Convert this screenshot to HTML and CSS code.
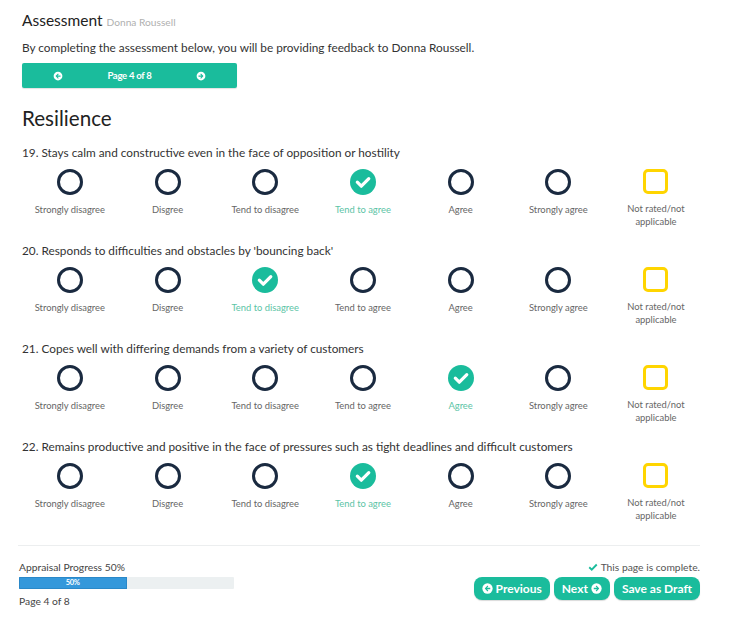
FILE: index.html
```html
<!DOCTYPE html>
<html>
<head>
<meta charset="utf-8">
<link rel="stylesheet" href="styles.css">
</head>
<body>
<div class="page">
  <h1 class="title">Assessment <small>Donna Roussell</small></h1>
  <p class="intro">By completing the assessment below, you will be providing feedback to Donna Roussell.</p>
  <div class="pager">
    <svg class="arrow" viewBox="0 0 16 16"><circle cx="8" cy="8" r="7" fill="#fff"/><path d="M12 7H7.2l2-2-1.2-1.2L4 8l4 4.2 1.2-1.2-2-2H12z" fill="#1abc9c"/></svg>
    <span>Page 4 of 8</span>
    <svg class="arrow" viewBox="0 0 16 16"><circle cx="8" cy="8" r="7" fill="#fff"/><path d="M4 7h4.8l-2-2L8 3.8 12 8l-4 4.2-1.2-1.2 2-2H4z" fill="#1abc9c"/></svg>
  </div>

  <h2 class="section">Resilience</h2>

  <div class="question">
    <p class="qtext">19. Stays calm and constructive even in the face of opposition or hostility</p>
    <div class="scale">
      <div class="opt"><span class="ring"></span><span class="lbl">Strongly disagree</span></div>
      <div class="opt"><span class="ring"></span><span class="lbl">Disgree</span></div>
      <div class="opt"><span class="ring"></span><span class="lbl">Tend to disagree</span></div>
      <div class="opt sel"><svg class="chk" viewBox="0 0 26 26"><circle cx="13" cy="13" r="13" fill="#1abc9c"/><path d="M7.3 13.2l4 4 7.5-7.6" fill="none" stroke="#fff" stroke-width="3.2" stroke-linecap="round" stroke-linejoin="round"/></svg><span class="lbl">Tend to agree</span></div>
      <div class="opt"><span class="ring"></span><span class="lbl">Agree</span></div>
      <div class="opt"><span class="ring"></span><span class="lbl">Strongly agree</span></div>
      <div class="opt na"><span class="box"></span><span class="lbl">Not rated/not applicable</span></div>
    </div>
  </div>

  <div class="question">
    <p class="qtext">20. Responds to difficulties and obstacles by 'bouncing back'</p>
    <div class="scale">
      <div class="opt"><span class="ring"></span><span class="lbl">Strongly disagree</span></div>
      <div class="opt"><span class="ring"></span><span class="lbl">Disgree</span></div>
      <div class="opt sel"><svg class="chk" viewBox="0 0 26 26"><circle cx="13" cy="13" r="13" fill="#1abc9c"/><path d="M7.3 13.2l4 4 7.5-7.6" fill="none" stroke="#fff" stroke-width="3.2" stroke-linecap="round" stroke-linejoin="round"/></svg><span class="lbl">Tend to disagree</span></div>
      <div class="opt"><span class="ring"></span><span class="lbl">Tend to agree</span></div>
      <div class="opt"><span class="ring"></span><span class="lbl">Agree</span></div>
      <div class="opt"><span class="ring"></span><span class="lbl">Strongly agree</span></div>
      <div class="opt na"><span class="box"></span><span class="lbl">Not rated/not applicable</span></div>
    </div>
  </div>

  <div class="question">
    <p class="qtext">21. Copes well with differing demands from a variety of customers</p>
    <div class="scale">
      <div class="opt"><span class="ring"></span><span class="lbl">Strongly disagree</span></div>
      <div class="opt"><span class="ring"></span><span class="lbl">Disgree</span></div>
      <div class="opt"><span class="ring"></span><span class="lbl">Tend to disagree</span></div>
      <div class="opt"><span class="ring"></span><span class="lbl">Tend to agree</span></div>
      <div class="opt sel"><svg class="chk" viewBox="0 0 26 26"><circle cx="13" cy="13" r="13" fill="#1abc9c"/><path d="M7.3 13.2l4 4 7.5-7.6" fill="none" stroke="#fff" stroke-width="3.2" stroke-linecap="round" stroke-linejoin="round"/></svg><span class="lbl">Agree</span></div>
      <div class="opt"><span class="ring"></span><span class="lbl">Strongly agree</span></div>
      <div class="opt na"><span class="box"></span><span class="lbl">Not rated/not applicable</span></div>
    </div>
  </div>

  <div class="question">
    <p class="qtext">22. Remains productive and positive in the face of pressures such as tight deadlines and difficult customers</p>
    <div class="scale">
      <div class="opt"><span class="ring"></span><span class="lbl">Strongly disagree</span></div>
      <div class="opt"><span class="ring"></span><span class="lbl">Disgree</span></div>
      <div class="opt"><span class="ring"></span><span class="lbl">Tend to disagree</span></div>
      <div class="opt sel"><svg class="chk" viewBox="0 0 26 26"><circle cx="13" cy="13" r="13" fill="#1abc9c"/><path d="M7.3 13.2l4 4 7.5-7.6" fill="none" stroke="#fff" stroke-width="3.2" stroke-linecap="round" stroke-linejoin="round"/></svg><span class="lbl">Tend to agree</span></div>
      <div class="opt"><span class="ring"></span><span class="lbl">Agree</span></div>
      <div class="opt"><span class="ring"></span><span class="lbl">Strongly agree</span></div>
      <div class="opt na"><span class="box"></span><span class="lbl">Not rated/not applicable</span></div>
    </div>
  </div>
</div>

<div class="footer">
  <div class="progress-col">
    <div class="ptitle">Appraisal Progress 50%</div>
    <div class="bar"><div class="fill" style="width:50%">50%</div></div>
    <div class="pnum">Page 4 of 8</div>
  </div>
  <div class="actions">
    <div class="complete"><svg class="tick" viewBox="0 0 12 12"><path d="M1.5 6.3l3 3 6-6.3" fill="none" stroke="#1abc9c" stroke-width="2.2"/></svg>This page is complete.</div>
    <div class="buttons">
      <button class="btn"><svg class="bicon" viewBox="0 0 16 16"><circle cx="8" cy="8" r="7.5" fill="#fff"/><path d="M12 7H7.2l2-2-1.2-1.2L4 8l4 4.2 1.2-1.2-2-2H12z" fill="#1abc9c"/></svg>Previous</button>
      <button class="btn">Next<svg class="bicon right" viewBox="0 0 16 16"><circle cx="8" cy="8" r="7.5" fill="#fff"/><path d="M4 7h4.8l-2-2L8 3.8 12 8l-4 4.2-1.2-1.2 2-2H4z" fill="#1abc9c"/></svg></button>
      <button class="btn">Save as Draft</button>
    </div>
  </div>
</div>
</body>
</html>
```
FILE: styles.css
```css
* { box-sizing: border-box; }
html, body { margin: 0; padding: 0; background: #fff; }
body {
  font-family: Lato, "Open Sans", "Liberation Sans", sans-serif;
  color: #333;
  width: 730px;
}
.page { padding: 10px 22px 0 22px; }
.title {
  margin: 0;
  font-size: 15.5px;
  line-height: 20px;
  font-weight: 400;
  color: #222;
}
.title small { font-size: 10.2px; color: #b0b0b0; }
.intro {
  margin: 7px 0 0 0;
  font-size: 11.8px;
  line-height: 17px;
  color: #333;
}
.pager {
  margin-top: 7px;
  width: 215px;
  height: 25px;
  background: #1abc9c;
  border-radius: 2px;
  box-shadow: 0 1px 1px rgba(0,0,0,0.12);
  display: flex;
  align-items: center;
  justify-content: space-between;
  padding: 0 31px 0 31px;
  color: #fff;
  font-size: 9.6px;
  font-weight: 700;
  letter-spacing: -0.3px;
}
.arrow { width: 10px; height: 10px; }
.section {
  margin: 18px 0 0 0;
  font-size: 20.6px;
  line-height: 24px;
  font-weight: 400;
  color: #222;
}
.question { margin-bottom: 14px; }
.section + .question { margin-top: 14px; }
.qtext {
  margin: 0;
  font-size: 11.8px;
  line-height: 17px;
  color: #333;
}
.scale {
  display: grid;
  grid-template-columns: repeat(7, 97.7px);
  margin-left: -1px;
  margin-top: 8px;
}
.opt {
  display: flex;
  flex-direction: column;
  align-items: center;
}
.ring {
  width: 26px;
  height: 26px;
  border: 3px solid #1a2a40;
  border-radius: 50%;
}
.chk { width: 26px; height: 26px; display: block; }
.box {
  width: 25px;
  height: 25px;
  border: 3px solid #ffd500;
  border-radius: 5px;
}
.lbl {
  margin-top: 8px;
  font-size: 9.4px;
  line-height: 13px;
  color: #666;
  text-align: center;
  width: 94px;
}
.sel .lbl { color: #5cc4a6; }
.na .lbl { width: 64px; }

.footer {
  margin: 23px 30px 0 18px;
  border-top: 1px solid #eceeef;
  display: flex;
  justify-content: space-between;
  padding-top: 14px;
}
.progress-col { width: 216px; padding-left: 1px; }
.ptitle { font-size: 10.3px; line-height: 14px; color: #444; }
.bar {
  margin-top: 3px;
  height: 12px;
  background: #ecf0f1;
  border-radius: 1px;
  overflow: hidden;
}
.fill {
  height: 12px;
  background: #3498db;
  border: 1px solid #2a88c8;
  color: #fff;
  font-size: 7.5px;
  font-weight: 700;
  line-height: 10px;
  text-align: center;
  letter-spacing: -0.3px;
}
.pnum { margin-top: 5px; font-size: 10.3px; line-height: 14px; color: #444; }
.actions { display: flex; flex-direction: column; align-items: flex-end; }
.complete {
  font-size: 10.3px;
  line-height: 14px;
  color: #555;
  display: flex;
  align-items: center;
}
.tick { width: 10px; height: 10px; margin-right: 3px; }
.buttons { display: flex; gap: 4px; margin-top: 3px; }
.btn {
  font-family: Lato, "Open Sans", "Liberation Sans", sans-serif;
  background: #1abc9c;
  color: #fff;
  border: none;
  border-radius: 8px;
  box-shadow: 0 1px 1px rgba(0,0,0,0.15);
  height: 23px;
  padding: 0 8px;
  font-size: 12px;
  font-weight: 700;
  display: flex;
  align-items: center;
}
.bicon { width: 11px; height: 11px; margin-right: 3px; }
.bicon.right { margin-right: 0; margin-left: 3px; }
```
